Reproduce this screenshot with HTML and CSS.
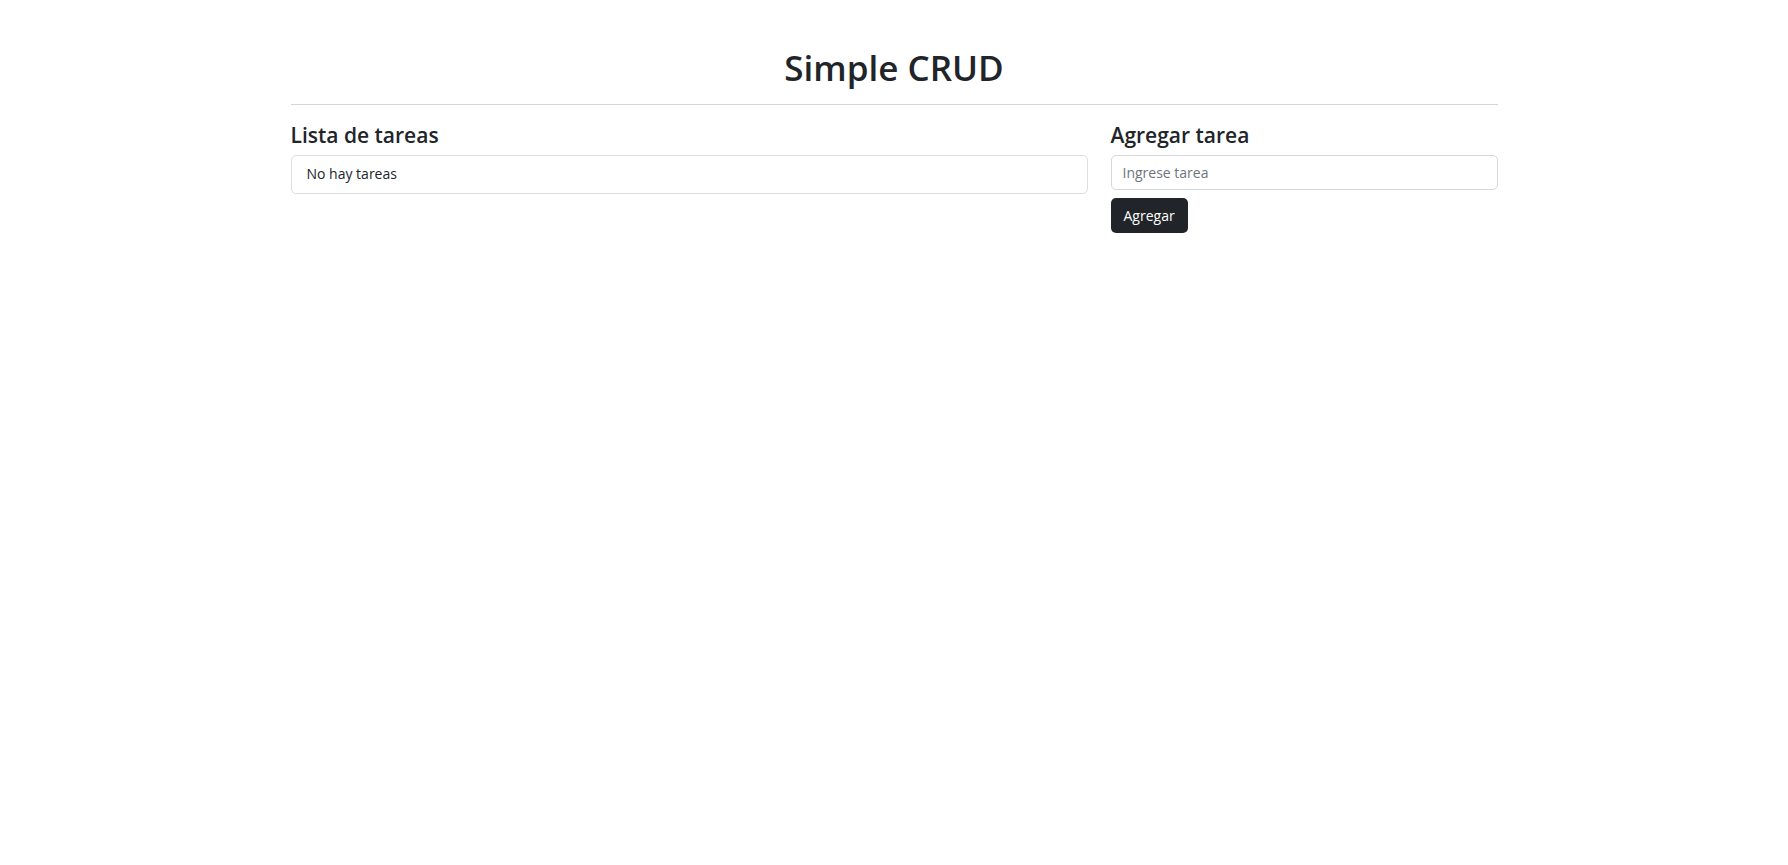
FILE: index.html
```html
<!DOCTYPE html>
<html lang="es">
<head>
<meta charset="utf-8">
<title>Simple CRUD</title>
<link rel="stylesheet" href="styles.css">
</head>
<body>
<div class="container">
  <h1 class="title">Simple CRUD</h1>
  <hr class="divider">
  <div class="row">
    <section class="col-list">
      <h4 class="section-title">Lista de tareas</h4>
      <ul class="list-group">
        <li class="list-item">No hay tareas</li>
      </ul>
    </section>
    <section class="col-form">
      <h4 class="section-title">Agregar tarea</h4>
      <form class="task-form">
        <input class="form-input" type="text" placeholder="Ingrese tarea">
        <button class="btn-dark" type="submit">Agregar</button>
      </form>
    </section>
  </div>
</div>
</body>
</html>
```
FILE: styles.css
```css
* { box-sizing: border-box; }
html, body { margin: 0; padding: 0; background: #fff; }
body {
  font-family: "Open Sans", "Noto Sans", sans-serif;
  color: #212529;
  font-size: 14px;
}
.container {
  width: 1207px;
  margin: 0 auto;
}
.title {
  margin: 48px 0 0;
  font-size: 35px;
  line-height: 40px;
  font-weight: 600;
  text-align: center;
}
.divider {
  margin: 16px 0 0;
  border: 0;
  border-top: 1px solid #d3d4d5;
  height: 0;
}
.row {
  display: grid;
  grid-template-columns: 1fr 387px;
  column-gap: 23px;
}
.section-title {
  margin: 17px 0 0;
  font-size: 21px;
  line-height: 26px;
  font-weight: 600;
}
.list-group {
  list-style: none;
  margin: 7px 0 0;
  padding: 0;
}
.list-item {
  border: 1px solid #dcdfe2;
  border-radius: 5px;
  padding: 7px 15px 8px;
  line-height: 22px;
  font-size: 14px;
}
.task-form {
  margin-top: 7px;
  display: flex;
  flex-direction: column;
  align-items: flex-start;
  gap: 8px;
}
.form-input {
  width: 100%;
  height: 35px;
  border: 1px solid #d6d9dc;
  border-radius: 5px;
  padding: 0 11px;
  font: inherit;
  font-size: 14px;
  color: #212529;
}
.form-input::placeholder { color: #6c757d; }
.btn-dark {
  height: 35px;
  padding: 0 13px;
  border: 0;
  border-radius: 5px;
  background: #212529;
  color: #fff;
  font: inherit;
  font-size: 14px;
}
```
